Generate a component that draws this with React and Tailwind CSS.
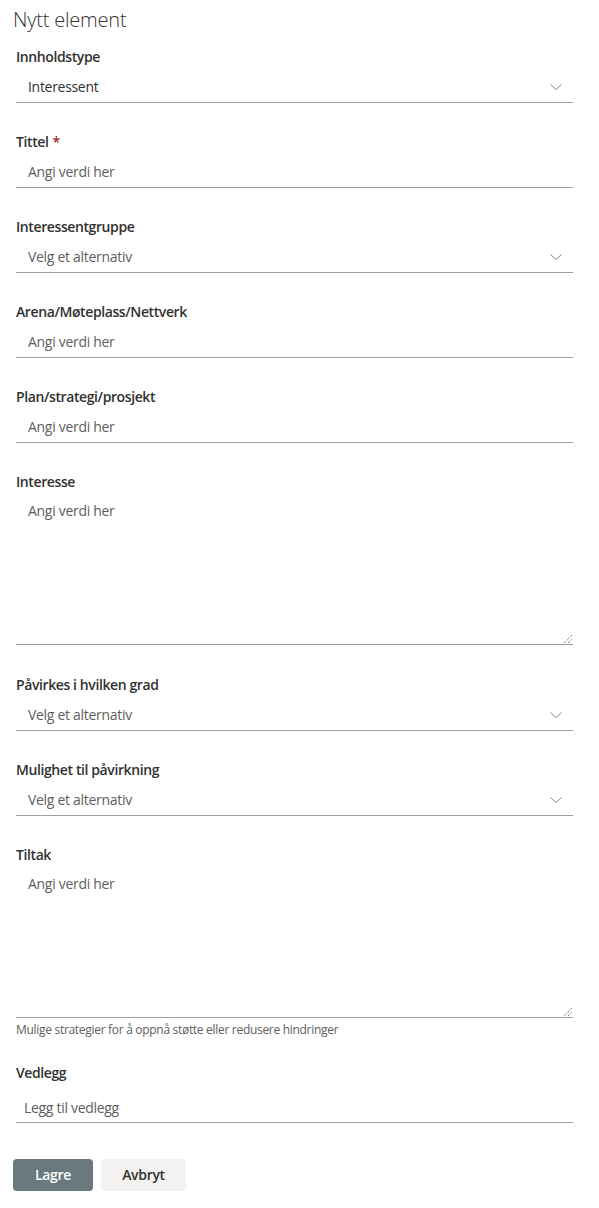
import React from "react";

const font = { fontFamily: '"Segoe UI", "Open Sans", "Noto Sans", sans-serif' };

function Chevron() {
  return (
    <svg width="14" height="8" viewBox="0 0 14 8" className="text-[#8a8886]">
      <polyline points="1.5,1.5 7,6.5 12.5,1.5" fill="none" stroke="currentColor" strokeWidth="1" />
    </svg>
  );
}

function Label({ children, required }) {
  return (
    <div className="h-5 text-sm leading-5 font-semibold tracking-[-0.4px] text-[#323130]">
      {children}
      {required && <span className="ml-1 text-[#a4262c]">*</span>}
    </div>
  );
}

function TextField({ label, required, placeholder, value, dropdown }) {
  return (
    <div className="mb-[29px]">
      <Label required={required}>{label}</Label>
      <div className="mt-1 flex h-8 items-center justify-between border-b border-[#a19f9d] pl-3 pr-[10px]">
        <span className={`text-sm leading-5 tracking-[-0.3px] ${value ? "text-[#323130]" : "text-[#605e5c]"}`}>
          {value || placeholder}
        </span>
        {dropdown && <Chevron />}
      </div>
    </div>
  );
}

function TextArea({ label, help }) {
  return (
    <div className={help ? "mb-[25px]" : "mb-[30px]"}>
      <Label>{label}</Label>
      <div className="relative mt-1 h-[149px] border-b border-[#a19f9d] pl-3 pt-[2px]">
        <span className="text-sm leading-5 tracking-[-0.3px] text-[#605e5c]">Angi verdi her</span>
        <svg width="8" height="8" viewBox="0 0 8 8" className="absolute bottom-[1px] right-[1px]">
          <line x1="0" y1="8" x2="8" y2="0" stroke="#605e5c" strokeWidth="1" strokeDasharray="1 1" />
          <line x1="4" y1="8" x2="8" y2="4" stroke="#605e5c" strokeWidth="1" strokeDasharray="1 1" />
        </svg>
      </div>
      {help && <div className="mt-1 text-xs leading-4 tracking-[-0.3px] text-[#605e5c]">{help}</div>}
    </div>
  );
}

export default function App() {
  return (
    <div className="min-h-[1208px] bg-white pl-4 pr-[26px]" style={font}>
      {/* Header */}
      <div className="-ml-[3px] pt-[6px] h-[34px] text-xl leading-7 font-light tracking-[-0.2px] text-[#323130]">
        Nytt element
      </div>

      <div className="mt-[13px]">
        <TextField label="Innholdstype" value="Interessent" dropdown />
        <TextField label="Tittel" required placeholder="Angi verdi her" />
        <TextField label="Interessentgruppe" placeholder="Velg et alternativ" dropdown />
        <TextField label="Arena/Møteplass/Nettverk" placeholder="Angi verdi her" />
        <TextField label="Plan/strategi/prosjekt" placeholder="Angi verdi her" />
        <TextArea label="Interesse" />
        <TextField label="Påvirkes i hvilken grad" placeholder="Velg et alternativ" dropdown />
        <TextField label="Mulighet til påvirkning" placeholder="Velg et alternativ" dropdown />
        <TextArea
          label="Tiltak"
          help="Mulige strategier for å oppnå støtte eller redusere hindringer"
        />

        {/* Attachments */}
        <div>
          <Label>Vedlegg</Label>
          <div className="mt-1 flex h-9 items-end border-b border-[#a19f9d] pb-1 pl-2">
            <span className="text-sm leading-5 tracking-[-0.3px] text-[#605e5c]">Legg til vedlegg</span>
          </div>
        </div>

        {/* Actions */}
        <div className="-ml-[3px] mt-9 flex gap-2">
          <button className="h-8 w-20 rounded-sm bg-[#69797e] text-sm font-semibold tracking-[-0.3px] text-white">
            Lagre
          </button>
          <button className="h-8 w-[85px] rounded-sm bg-[#f3f2f1] text-sm font-semibold tracking-[-0.3px] text-[#323130]">
            Avbryt
          </button>
        </div>
      </div>
    </div>
  );
}
